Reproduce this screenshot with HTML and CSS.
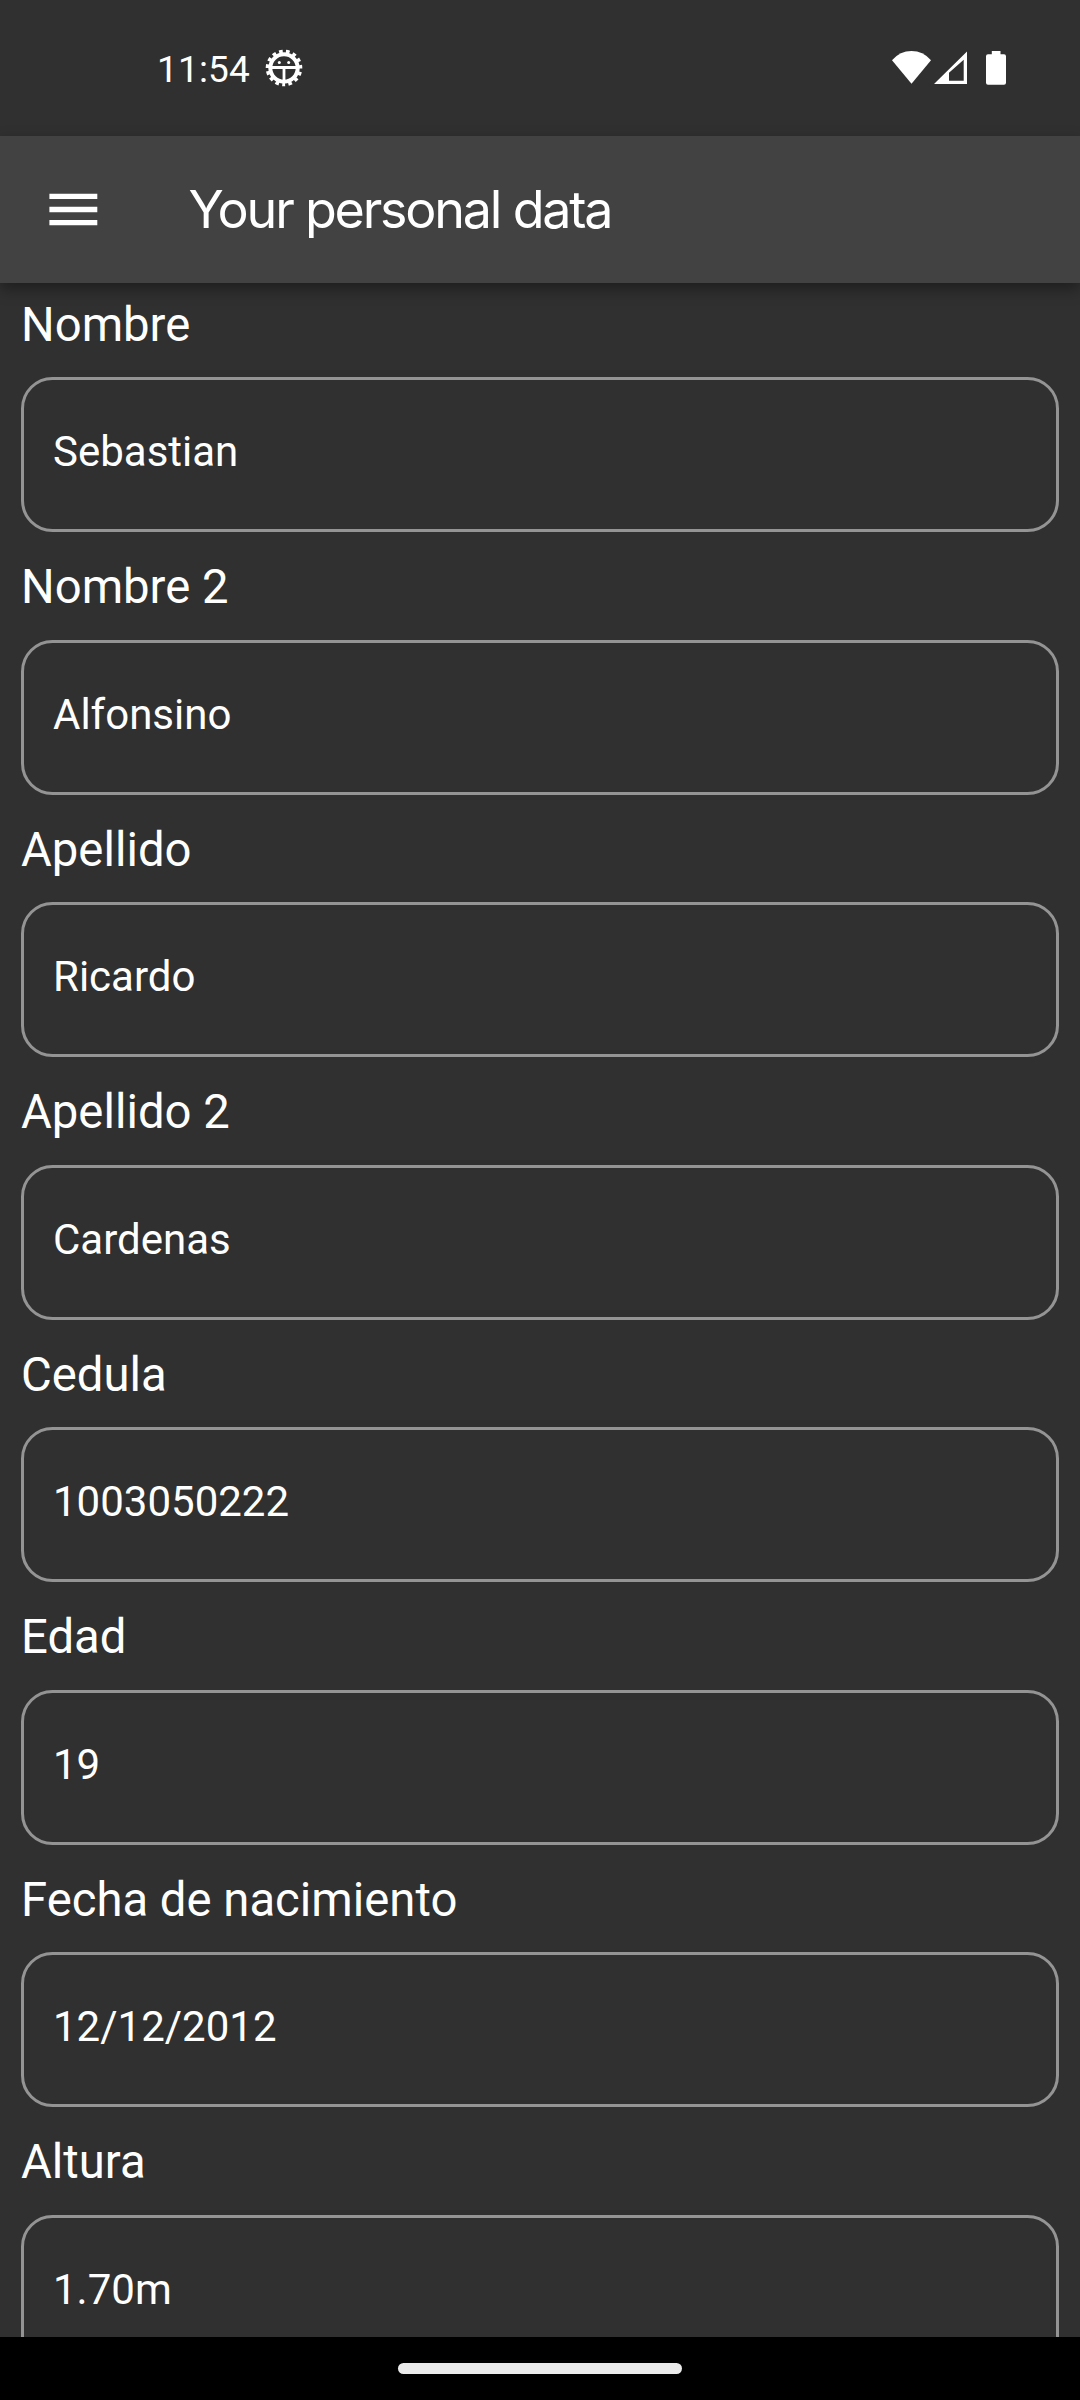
FILE: index.html
```html
<!DOCTYPE html>
<html lang="es">
<head>
<meta charset="utf-8">
<title>Your personal data</title>
<link rel="stylesheet" href="styles.css">
</head>
<body>
<div class="screen">
  <div class="status">
    <span class="time">11:54</span>
    <svg class="debug" viewBox="-20 -20 40 40" width="40" height="40" aria-hidden="true">
      <circle r="13.7" fill="none" stroke="#fff" stroke-width="4"/>
      <path d="M-12 -.5H12M0 0V13" stroke="#fff" stroke-width="2.8"/>
      <circle r="16.4" fill="none" stroke="#fff" stroke-width="3.8" stroke-dasharray="3.6 3.27" stroke-dashoffset="1.8" transform="rotate(90)"/>
      <circle cx="-4.7" cy="-5.5" r="1.5" fill="#fff"/>
      <circle cx="4.7" cy="-5.5" r="1.5" fill="#fff"/>
    </svg>
    <svg class="signals" viewBox="0 0 116 36" width="116" height="36" aria-hidden="true">
      <path d="M2 10.2Q10 1 21.5 1Q33 1 41 10.2L21.5 33.7Z" fill="#fff"/>
      <path fill-rule="evenodd" d="M44 34L77 1.5V34ZM59 22.7V30.8H73.7V9.7Z" fill="#fff"/>
      <path d="M101.8 1H110.5V4.2H114Q116 4.2 116 6.2V32.7Q116 34.7 114 34.7H98Q96 34.7 96 32.7V6.2Q96 4.2 98 4.2H101.8Z" fill="#fff"/>
    </svg>
  </div>
  <header class="appbar">
    <svg class="menu" viewBox="0 0 49 34" width="49" height="34" aria-hidden="true">
      <path d="M.4 3.4H48.3M.4 16.5H48.3M.4 29.6H48.3" stroke="#fff" stroke-width="5.4"/>
    </svg>
    <h1 class="title">Your personal data</h1>
  </header>
  <main class="form">
    <div class="field"><div class="label">Nombre</div><div class="box">Sebastian</div></div>
    <div class="field"><div class="label">Nombre 2</div><div class="box">Alfonsino</div></div>
    <div class="field"><div class="label">Apellido</div><div class="box">Ricardo</div></div>
    <div class="field"><div class="label">Apellido 2</div><div class="box">Cardenas</div></div>
    <div class="field"><div class="label">Cedula</div><div class="box">1003050222</div></div>
    <div class="field"><div class="label">Edad</div><div class="box">19</div></div>
    <div class="field"><div class="label">Fecha de nacimiento</div><div class="box">12/12/2012</div></div>
    <div class="field"><div class="label">Altura</div><div class="box">1.70m</div></div>
  </main>
  <div class="navbar"><div class="handle"></div></div>
</div>
</body>
</html>
```
FILE: styles.css
```css
* { box-sizing: border-box; }
body { margin: 0; background: #303030; }
.screen {
  width: 1080px;
  height: 2400px;
  display: flex;
  flex-direction: column;
  overflow: hidden;
  background: #303030;
  color: #fff;
  font-family: Roboto, sans-serif;
}
.status {
  flex: none;
  height: 136px;
  display: flex;
  align-items: flex-start;
  padding: 48px 74px 0 157px;
}
.time { font-size: 37px; line-height: 43px; letter-spacing: .15px; }
.debug { margin-left: 14px; }
.signals { margin: 2px 0 0 auto; }
.appbar {
  flex: none;
  height: 147px;
  display: flex;
  align-items: center;
  padding: 0 49px;
  background: #424242;
  box-shadow: 0 6px 14px rgba(0, 0, 0, .38);
  z-index: 1;
}
.title {
  margin: 0 0 0 90.5px;
  font-family: Inter, sans-serif;
  font-size: 52px;
  line-height: 62px;
  font-weight: 400;
  letter-spacing: -2.2px;
}
.form { flex: 1; min-height: 0; overflow: hidden; padding: .5px 21px 0; }
.field { height: 262.5px; }
.label { font-size: 47.25px; line-height: 83.6px; }
.box {
  height: 155px;
  margin-top: 10.3px;
  padding-left: 29px;
  border: 3px solid #949494;
  border-radius: 31.5px;
  font-size: 42px;
  line-height: 143.5px;
}
.navbar {
  flex: none;
  height: 63px;
  display: flex;
  align-items: center;
  justify-content: center;
  background: #000;
}
.handle { width: 284px; height: 11px; border-radius: 6px; background: #ebebeb; }
```
